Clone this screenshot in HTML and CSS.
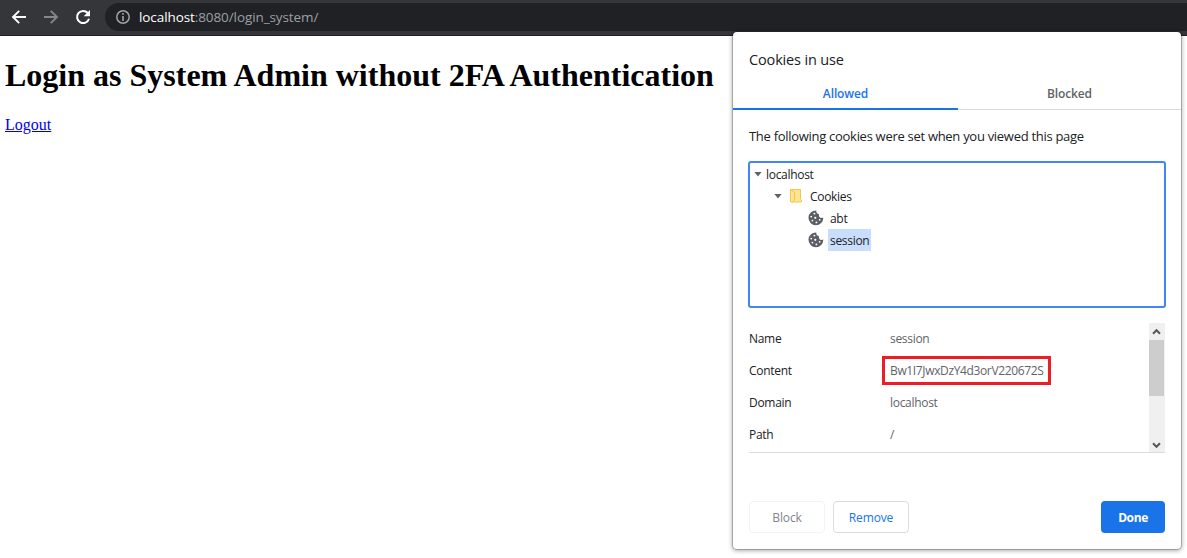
FILE: index.html
```html
<!DOCTYPE html>
<html lang="en">
<head>
<meta charset="utf-8">
<title>Login system</title>
<link rel="stylesheet" href="styles.css">
</head>
<body>
<svg class="defs" width="0" height="0" aria-hidden="true">
  <defs>
    <symbol id="cookie" viewBox="0 0 16 16"><path fill="#5b5e63" d="M8.4.4a3.2 3.2 0 0 0 2.6 3.9 2.9 2.9 0 0 0 4.3 3.3A7.4 7.4 0 1 1 8.4.4z"/><g fill="#fff"><circle cx="6.4" cy="3.6" r=".95"/><circle cx="3.2" cy="6.6" r=".95"/><circle cx="7.3" cy="7.8" r="1.1"/><circle cx="4.4" cy="10.6" r=".9"/><circle cx="8.4" cy="12.4" r=".95"/><circle cx="11.7" cy="9.8" r=".9"/></g></symbol>
  </defs>
</svg>
<header class="toolbar">
  <nav class="nav">
    <svg width="16" height="16" viewBox="0 0 16 16"><path d="M15 8H2M8.2 1.8 2 8l6.2 6.2" fill="none" stroke="#fff" stroke-width="1.9"/></svg>
    <svg width="16" height="16" viewBox="0 0 16 16"><path d="M1 8h13M7.8 1.8 14 8l-6.2 6.2" fill="none" stroke="#85878b" stroke-width="1.9"/></svg>
    <svg width="16" height="16" viewBox="0 0 16 16"><path d="M12.8 4A6.1 6.1 0 1 0 14 9.8" fill="none" stroke="#fff" stroke-width="2"/><path d="M15 1v6.3H8.7z" fill="#fff"/></svg>
  </nav>
  <div class="omnibox">
    <svg width="14" height="14" viewBox="0 0 14 14"><circle cx="7" cy="7" r="6.2" fill="none" stroke="#a0a3a7" stroke-width="1.5"/><path d="M7 3.1v1.6M7 6v5" stroke="#a0a3a7" stroke-width="1.6"/></svg>
    <span class="url"><span class="host">localhost</span>:8080/login_system/</span>
  </div>
</header>
<main class="page">
  <h1>Login as System Admin without 2FA Authentication</h1>
  <a class="logout" href="#">Logout</a>
</main>
<section class="dialog">
  <h2>Cookies in use</h2>
  <div class="tabs"><div class="tab active"><span>Allowed</span></div><div class="tab"><span>Blocked</span></div></div>
  <div class="body">
    <p class="desc"><span>The following cookies were set when you viewed this page</span></p>
    <div class="tree">
      <div class="node"><i class="arrow"></i><span class="label">localhost</span></div>
      <div class="node folder"><i class="arrow"></i><svg width="14" height="16" viewBox="0 0 14 16"><path d="M1.5 1.5h10v9.2l1.3 2.3-.8 1H5l-3.5-1z" fill="#ffe591" stroke="#efc94c"/><path d="M1.5 1.5 5.5 4v7.5l-2 3-2-.9z" fill="#ffe591" stroke="#efc94c"/></svg><span class="label">Cookies</span></div>
      <div class="node leaf"><svg width="16" height="16"><use href="#cookie"/></svg><span class="label">abt</span></div>
      <div class="node leaf"><svg width="16" height="16"><use href="#cookie"/></svg><span class="label selected">session</span></div>
    </div>
    <div class="details">
      <dl>
        <dt>Name</dt><dd>session</dd>
        <dt>Content</dt><dd><span class="marked">Bw1I7JwxDzY4d3orV220672S</span></dd>
        <dt>Domain</dt><dd>localhost</dd>
        <dt>Path</dt><dd>/</dd>
      </dl>
      <div class="scrollbar">
        <svg width="15" height="17" viewBox="0 0 15 17"><path d="M4 10.7 7.5 7.2 11 10.7" fill="none" stroke="#55575a" stroke-width="2"/></svg>
        <div class="thumb"></div>
        <svg class="down" width="15" height="17" viewBox="0 0 15 17"><path d="M4 8.3l3.5 3.5L11 8.3" fill="none" stroke="#55575a" stroke-width="2"/></svg>
      </div>
    </div>
    <div class="buttons"><button class="block" disabled>Block</button><button class="remove">Remove</button><button class="done">Done</button></div>
  </div>
</section>
</body>
</html>
```
FILE: styles.css
```css
* { box-sizing: border-box; }
body { margin: 0; height: 558px; overflow: hidden; background: #fff; font-family: "Open Sans", "Noto Sans", sans-serif; font-size: 12px; color: #202124; }
.defs { position: absolute; }
svg { display: block; flex: none; }
.toolbar { display: flex; height: 36px; background: #35363a; border-bottom: 1px solid #202124; padding: 3px 0 4px 11px; }
.nav { display: flex; gap: 16px; width: 94px; align-items: center; }
.omnibox { flex: 1; height: 28px; display: flex; align-items: center; gap: 9px; padding-left: 11px; background: #202124; border-radius: 14px 0 0 14px; }
.url { font-size: 13.5px; line-height: 28px; color: #9aa0a6; letter-spacing: -.09px; }
.host { color: #fff; }
.page { padding-left: 5px; font-family: "Liberation Serif", serif; }
h1 { margin: 0; padding-top: 21px; font-size: 32px; line-height: 37px; color: #000; white-space: nowrap; }
.logout { display: inline-block; margin-top: 22px; font-size: 16px; line-height: 18px; color: #00e; }
.dialog { position: absolute; left: 733px; top: 32px; width: 448px; height: 517px; background: #fff; border-radius: 4px; box-shadow: 0 0 0 1px rgba(0,0,0,.2), 0 1px 4px 1px rgba(0,0,0,.32); }
h2 { margin: 0; padding: 16px 16px 0; font-size: 14.5px; line-height: 24px; font-weight: 400; letter-spacing: -.15px; }
.tabs { display: flex; height: 38px; border-bottom: 1px solid #dadce0; }
.tab { height: 38px; width: 223px; text-align: center; font-weight: 600; line-height: 44px; color: #5f6368; letter-spacing: -.12px; }
.tab.active { width: 225px; color: #1a73e8; border-bottom: 2px solid #1a73e8; }
.body { padding: 0 16px; }
.desc { margin: 0; padding-top: 16px; font-size: 13px; line-height: 20px; height: 51px; white-space: nowrap; letter-spacing: -.29px; }
.tree { width: 418px; height: 147px; margin-left: -1px; border: 2px solid #4285f4; border-radius: 3px; padding: 0 0 0 4px; letter-spacing: -.3px; }
.node { display: flex; align-items: center; height: 22px; }
.arrow { flex: none; width: 8px; height: 5px; background: #5f6368; clip-path: polygon(0 0, 100% 0, 50% 100%); }
.label { margin-left: 2px; padding: 0 2px; line-height: 23px; height: 22px; }
.folder { padding-left: 20px; }
.folder svg { margin-left: 7px; }
.folder .label { margin-left: 5px; }
.leaf { padding-left: 54px; }
.leaf .label { margin-left: 4px; }
.selected { width: 43px; background: #c9defc; }
.details { display: flex; justify-content: space-between; height: 130px; margin-top: 15px; border-bottom: 1px solid #dadce0; letter-spacing: -.3px; }
dl { display: grid; grid-template-columns: 141px auto; grid-auto-rows: 32px; line-height: 32px; margin: 0; }
dd { margin: 0; color: #5f6368; }
.marked { display: block; height: 29px; margin: 1px 0 0 -8px; width: 169px; border: 3px solid #ee1c25; padding-left: 5px; line-height: 24px; white-space: nowrap; letter-spacing: -.36px; }
.scrollbar { width: 16px; height: 129px; background: #f0f0f0; display: flex; flex-direction: column; }
.thumb { width: 15px; height: 56px; background: #cdcdcd; }
.down { margin-top: auto; }
.buttons { display: flex; gap: 8px; margin-top: 48px; }
button { width: 76px; height: 32px; padding: 0; border: 1px solid #dadce0; border-radius: 4px; background: #fff; font: 500 12px "Open Sans", sans-serif; letter-spacing: -.15px; }
.block { color: #80868b; border-color: #f1f3f4; }
.remove { color: #1a73e8; }
.done { width: 64px; margin-left: auto; background: #1a73e8; border: 0; color: #fff; font-weight: 700; letter-spacing: -.4px; }
```
